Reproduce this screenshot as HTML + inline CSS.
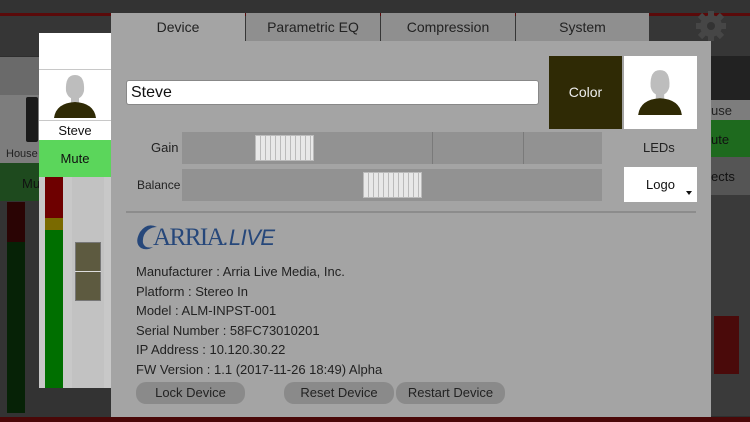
<!DOCTYPE html>
<html><head><style>
*{margin:0;padding:0;box-sizing:border-box}
body{width:750px;height:422px;overflow:hidden;background:#2e2e2e;font-family:"Liberation Sans",sans-serif;position:relative}
.a{position:absolute}
.t{font-size:13px;color:#222}
</style></head><body>
<div class="a" style="left:0;top:0;width:750px;height:13px;background:#333"></div>
<div class="a" style="left:0;top:13px;width:750px;height:3px;background:#5a0a0a"></div>
<div class="a" style="left:0;top:16px;width:750px;height:40px;background:#363636"></div>
<div class="a" style="left:0;top:57px;width:111px;height:38px;background:#6a6a6a"></div>
<div class="a" style="left:0;top:95px;width:111px;height:68px;background:#7d7d7d"></div>
<div class="a" style="left:26px;top:97px;width:12px;height:45px;background:#1a1a1a;border-radius:2px"></div>
<div class="a t" style="left:6px;top:148px;font-size:11px;color:#222">House</div>
<div class="a" style="left:0;top:163px;width:111px;height:38px;background:#1e4a1e"></div>
<div class="a t" style="left:22px;top:176px;color:#111">Mu</div>
<div class="a" style="left:0;top:201px;width:111px;height:216px;background:#333"></div>
<div class="a" style="left:7px;top:202px;width:18px;height:211px;background:#062206"></div>
<div class="a" style="left:7px;top:202px;width:18px;height:40px;background:#2a0404"></div>
<div class="a" style="left:711px;top:56px;width:39px;height:360px;background:#3a3a3a"></div>
<div class="a" style="left:711px;top:56px;width:39px;height:44px;background:#222"></div>
<div class="a" style="left:711px;top:100px;width:39px;height:20px;background:#7d7d7d"></div>
<div class="a t" style="left:711px;top:103px;color:#222">use</div>
<div class="a" style="left:711px;top:120px;width:39px;height:37px;background:#1e6a1e"></div>
<div class="a t" style="left:711px;top:132px;color:#111">ute</div>
<div class="a" style="left:711px;top:157px;width:39px;height:38px;background:#555"></div>
<div class="a t" style="left:711px;top:169px;color:#111">ects</div>
<div class="a" style="left:714px;top:316px;width:25px;height:58px;background:#4a0a0a"></div>
<div class="a" style="left:0;top:417px;width:750px;height:5px;background:#4a0808"></div>
<svg class="a" style="left:693px;top:8px" width="36" height="36" viewBox="0 0 36 36"><g fill="#464646"><circle cx="18" cy="18" r="11"/><g stroke="#464646" stroke-width="6"><line x1="18" y1="3" x2="18" y2="33"/><line x1="3" y1="18" x2="33" y2="18"/><line x1="7" y1="7" x2="29" y2="29"/><line x1="29" y1="7" x2="7" y2="29"/></g></g><circle cx="18" cy="18" r="4" fill="#333"/></svg>
<div class="a" style="left:39px;top:33px;width:72px;height:355px;background:#c8c8c8"></div>
<div class="a" style="left:39px;top:33px;width:72px;height:36px;background:#fff"></div>
<div class="a" style="left:39px;top:70px;width:72px;height:50px;background:#fff"></div>
<svg class="a" style="left:52px;top:71px" width="46" height="48" viewBox="0 0 46 48"><path d="M14 20 Q13 4 23 4 Q33 4 32 20 Q30 28 23 28 Q16 28 14 20Z" fill="#bdbdbd"/><path d="M19 26 h8 v6 h-8z" fill="#bdbdbd"/><path d="M2 47 Q4 32 23 31 Q42 32 44 47Z" fill="#2f2a05"/></svg>
<div class="a" style="left:39px;top:121px;width:72px;height:19px;background:#fff;text-align:center;font-size:13px;line-height:19px;color:#111">Steve</div>
<div class="a" style="left:39px;top:140px;width:72px;height:37px;background:#5bd65b;text-align:center;font-size:13px;line-height:37px;color:#111">Mute</div>
<div class="a" style="left:45px;top:177px;width:18px;height:211px;background:#006f00"></div>
<div class="a" style="left:45px;top:177px;width:18px;height:41px;background:#6e0000"></div>
<div class="a" style="left:45px;top:218px;width:18px;height:12px;background:#7a6a00"></div>
<div class="a" style="left:72px;top:177px;width:32px;height:211px;background:#c2c2c2"></div>
<div class="a" style="left:75px;top:242px;width:26px;height:59px;background:#5d5a40;border:1px solid #777"></div>
<div class="a" style="left:75px;top:271px;width:26px;height:1px;background:#ddd"></div>
<div class="a" style="left:111px;top:13px;width:134px;height:30px;background:#a4a4a4;text-align:center;font-size:14px;line-height:28px;color:#222">Device</div>
<div class="a" style="left:246px;top:13px;width:134px;height:28px;background:#8f8f8f;text-align:center;font-size:14px;line-height:28px;color:#222">Parametric EQ</div>
<div class="a" style="left:381px;top:13px;width:134px;height:28px;background:#8f8f8f;text-align:center;font-size:14px;line-height:28px;color:#222">Compression</div>
<div class="a" style="left:516px;top:13px;width:133px;height:28px;background:#8f8f8f;text-align:center;font-size:14px;line-height:28px;color:#222">System</div>
<div class="a" style="left:111px;top:41px;width:600px;height:376px;background:#a4a4a4"></div>
<div class="a" style="left:126px;top:80px;width:413px;height:25px;background:#fff;border:1px solid #888;border-radius:3px;font-size:16px;line-height:23px;padding-left:4px;color:#111">Steve</div>
<div class="a" style="left:549px;top:56px;width:73px;height:73px;background:#2f2a05;color:#eee;text-align:center;line-height:73px;font-size:14px">Color</div>
<div class="a" style="left:624px;top:56px;width:73px;height:73px;background:#fff"></div>
<svg class="a" style="left:636px;top:66px" width="48" height="50" viewBox="0 0 46 48"><path d="M14 20 Q13 4 23 4 Q33 4 32 20 Q30 28 23 28 Q16 28 14 20Z" fill="#bdbdbd"/><path d="M19 26 h8 v6 h-8z" fill="#bdbdbd"/><path d="M2 47 Q4 32 23 31 Q42 32 44 47Z" fill="#2f2a05"/></svg>
<div class="a t" style="left:151px;top:140px">Gain</div>
<div class="a" style="left:182px;top:132px;width:420px;height:32px;background:#929292"></div>
<div class="a" style="left:432px;top:132px;width:1px;height:32px;background:#7a7a7a"></div>
<div class="a" style="left:523px;top:132px;width:1px;height:32px;background:#7a7a7a"></div>
<div class="a" style="left:255px;top:135px;width:59px;height:26px;background:repeating-linear-gradient(90deg,#e8e8e8 0 4px,#bbb 4px 5px),#ddd;border:1px solid #bbb"></div>
<div class="a t" style="left:137px;top:178px;font-size:12px">Balance</div>
<div class="a" style="left:182px;top:169px;width:420px;height:32px;background:#929292"></div>
<div class="a" style="left:363px;top:172px;width:59px;height:26px;background:repeating-linear-gradient(90deg,#e8e8e8 0 4px,#bbb 4px 5px),#ddd;border:1px solid #bbb"></div>
<div class="a t" style="left:643px;top:140px;font-size:13px">LEDs</div>
<div class="a" style="left:624px;top:167px;width:73px;height:35px;background:#fff;text-align:center;line-height:35px;font-size:13px;color:#111">Logo</div>
<div class="a" style="left:686px;top:191px;width:0;height:0;border-left:3px solid transparent;border-right:3px solid transparent;border-top:4px solid #111"></div>
<div class="a" style="left:126px;top:211px;width:570px;height:2px;background:#8c8c8c"></div>
<svg class="a" style="left:135px;top:223px" width="24" height="28" viewBox="0 0 24 28"><path d="M22 4 Q12 -1 5 9 Q-1 20 6 25 Q12 28 18 24 Q10 26 8 20 Q7 12 13 7 Q17 4 22 4Z" fill="#26477a"/></svg>
<div class="a" style="left:153px;top:224px;font-family:'Liberation Serif',serif;font-size:25px;color:#26477a;letter-spacing:-1.5px;line-height:28px">ARRIA<span style="font-family:'Liberation Sans',sans-serif;font-style:italic;font-size:22px;letter-spacing:-0.5px">.LIVE</span></div>
<div class="a t" style="left:136px;top:262px;line-height:19.6px">Manufacturer : Arria Live Media, Inc.<br>Platform : Stereo In<br>Model : ALM-INPST-001<br>Serial Number : 58FC73010201<br>IP Address : 10.120.30.22<br>FW Version : 1.1 (2017-11-26 18:49) Alpha</div>
<div class="a" style="left:136px;top:382px;width:109px;height:22px;background:#8a8a8a;border-radius:10px;text-align:center;line-height:22px;font-size:13px;color:#222">Lock Device</div>
<div class="a" style="left:284px;top:382px;width:110px;height:22px;background:#8a8a8a;border-radius:10px;text-align:center;line-height:22px;font-size:13px;color:#222">Reset Device</div>
<div class="a" style="left:396px;top:382px;width:109px;height:22px;background:#8a8a8a;border-radius:10px;text-align:center;line-height:22px;font-size:13px;color:#222">Restart Device</div>
</body></html>
